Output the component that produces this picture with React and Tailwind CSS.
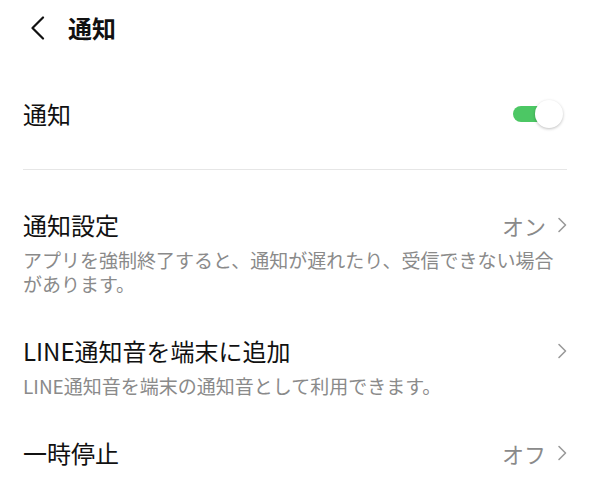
const font = { fontFamily: '"Noto Sans CJK JP", "Noto Sans", sans-serif' };

function Chevron() {
  return (
    <svg width="10" height="16" viewBox="0 0 10 16" fill="none" className="shrink-0">
      <path d="M2 1.5 L8.5 8 L2 14.5" stroke="#9a9a9a" strokeWidth="1.6" strokeLinecap="round" strokeLinejoin="round" />
    </svg>
  );
}

function Row({ title, value, desc }) {
  return (
    <div className="px-[23px]">
      <div className="flex items-center justify-between h-[36px]">
        <span className="text-[24px] leading-none text-[#111]">{title}</span>
        <div className="flex items-center gap-[11px] text-[#8a8a8a]">
          {value && <span className="text-[22px] leading-none">{value}</span>}
          <Chevron />
        </div>
      </div>
      {desc && (
        <p className="mt-[5px] text-[19px] leading-[24px] text-[#8a8a8a]">{desc}</p>
      )}
    </div>
  );
}

export default function App() {
  return (
    <div className="w-[590px] h-[493px] bg-white overflow-hidden" style={font}>
      <div className="flex items-center h-[56px] pl-[29px]">
        <svg width="18" height="24" viewBox="0 0 18 24" fill="none">
          <path d="M14 1.5 L3.5 12 L14 22.5" stroke="#111" strokeWidth="2.2" strokeLinecap="round" strokeLinejoin="round" />
        </svg>
        <span className="ml-[21px] text-[24px] font-bold leading-none text-[#111]">通知</span>
      </div>

      <div className="flex items-center justify-between h-[60px] mt-[28px] px-[23px]">
        <span className="text-[24px] leading-none text-[#111]">通知</span>
        <div className="relative w-[50px] h-[28px] mr-[4px]">
          <div className="absolute left-0 top-[6px] w-[36px] h-[16px] rounded-full bg-[#4cc764]" />
          <div className="absolute right-0 top-0 w-[28px] h-[28px] rounded-full bg-white shadow-[0_1px_3px_rgba(0,0,0,0.25)]" />
        </div>
      </div>

      <div className="mx-[23px] mt-[25px] border-t border-[#e6e6e6]" />

      <div className="mt-[37px]">
        <Row title="通知設定" value="オン" desc="アプリを強制終了すると、通知が遅れたり、受信できない場合があります。" />
      </div>
      <div className="mt-[37px]">
        <Row title="LINE通知音を端末に追加" desc="LINE通知音を端末の通知音として利用できます。" />
      </div>
      <div className="mt-[37px]">
        <Row title="一時停止" value="オフ" />
      </div>
    </div>
  );
}
